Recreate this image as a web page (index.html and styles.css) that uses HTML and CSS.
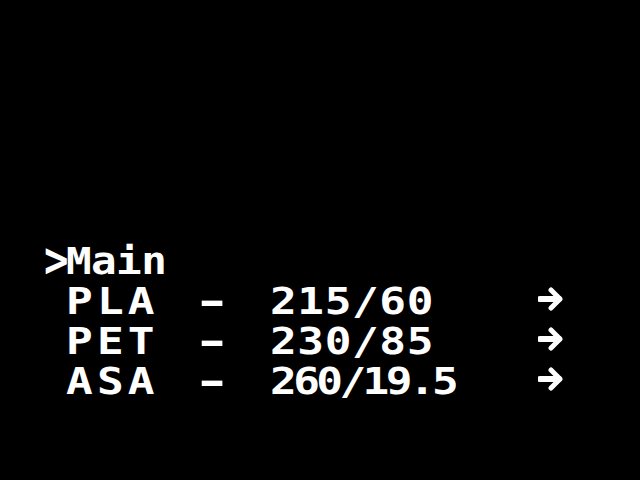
FILE: index.html
```html
<!DOCTYPE html>
<html>
<head>
<meta charset="utf-8">
<link rel="stylesheet" href="styles.css">
</head>
<body>
<div class="screen">
  <div class="row">
    <span class="cursor">&gt;</span>
    <span class="title">Main</span>
  </div>
  <div class="row">
    <span class="cursor"></span>
    <span class="name">PLA</span>
    <span class="dash">-</span>
    <span class="value">215/60</span>
    <span class="arrow"><svg width="26" height="24" viewBox="0 0 26 24"><path d="M2 12H21" stroke="#fff" stroke-width="6" stroke-linecap="round"/><path d="M13 3L22 12L13 21" fill="none" stroke="#fff" stroke-width="5" stroke-linecap="round" stroke-linejoin="round"/></svg></span>
  </div>
  <div class="row">
    <span class="cursor"></span>
    <span class="name">PET</span>
    <span class="dash">-</span>
    <span class="value">230/85</span>
    <span class="arrow"><svg width="26" height="24" viewBox="0 0 26 24"><path d="M2 12H21" stroke="#fff" stroke-width="6" stroke-linecap="round"/><path d="M13 3L22 12L13 21" fill="none" stroke="#fff" stroke-width="5" stroke-linecap="round" stroke-linejoin="round"/></svg></span>
  </div>
  <div class="row">
    <span class="cursor"></span>
    <span class="name">ASA</span>
    <span class="dash">-</span>
    <span class="value value-tight">260/19.5</span>
    <span class="arrow"><svg width="26" height="24" viewBox="0 0 26 24"><path d="M2 12H21" stroke="#fff" stroke-width="6" stroke-linecap="round"/><path d="M13 3L22 12L13 21" fill="none" stroke="#fff" stroke-width="5" stroke-linecap="round" stroke-linejoin="round"/></svg></span>
  </div>
</div>
</body>
</html>
```
FILE: styles.css
```css
html, body {
  margin: 0;
  padding: 0;
  background: #000;
}
.screen {
  width: 640px;
  height: 480px;
  box-sizing: border-box;
  padding: 242px 0 0 45px;
  color: #fff;
  font-family: "DejaVu Sans Mono", monospace;
  font-weight: bold;
  font-size: 37px;
  line-height: 40px;
}
.row {
  display: flex;
  height: 40px;
  white-space: nowrap;
}
.cursor {
  display: inline-block;
  width: 21px;
  transform: scale(1.1, 1.35);
  transform-origin: 50% 60%;
}
.title {
  display: inline-block;
  letter-spacing: -0.5px;
  transform: scaleX(1.15);
  transform-origin: 0 50%;
}
.name {
  display: inline-block;
  width: 126px;
  letter-spacing: 3.5px;
  transform: scaleX(1.2);
  transform-origin: 0 50%;
}
.dash {
  display: inline-block;
  width: 78px;
  transform: scaleX(1.8);
  transform-origin: 0 50%;
}
.value {
  display: inline-block;
  width: 268px;
  letter-spacing: 0.5px;
  transform: scaleX(1.2);
  transform-origin: 0 50%;
}
.value-tight {
  letter-spacing: -3px;
}
.arrow svg {
  display: block;
  margin-top: 5px;
}
```
